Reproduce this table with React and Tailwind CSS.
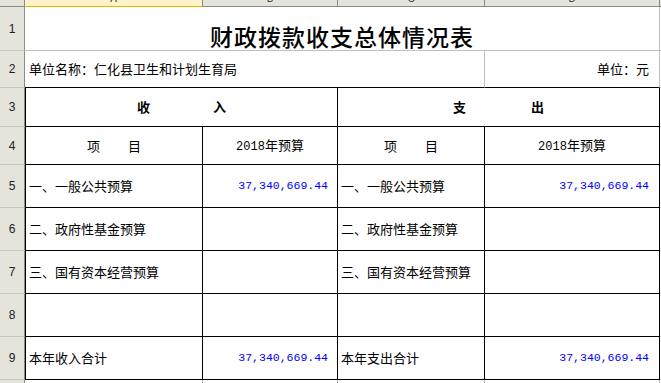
import React from 'react';

const cjk = "font-['Noto_Sans_CJK_SC',sans-serif]";
const mono = "font-['Liberation_Mono',monospace]";

const RowHead = ({ n }) => (
    <div className="w-[25px] shrink-0 bg-[#e4e3dc] border-r border-r-[#8a8a8a] border-b border-b-[#c6c5be] flex items-center justify-center text-[12px] text-[#222] font-['Liberation_Sans',sans-serif]">
        {n}
    </div>
);

const Amount = () => (
    <span className={`${mono} text-[11.5px] text-[#0000ff]`}>37,340,669.44</span>
);

const ColHead = ({ label, className }) => (
    <div className={`h-[7px] shrink-0 overflow-hidden flex justify-center ${className}`}>
        <span className="-mt-[6px] leading-[10px] text-[10px] text-[#333] font-['Liberation_Sans',sans-serif]">{label}</span>
    </div>
);

const Budget = () => (
    <span className="text-[13px] text-black">
        <span className={`${mono} text-[12px]`}>2018</span>年预算
    </span>
);

const BodyRow = ({ n, label, amountLeft, amountRight, labelRight }) => (
    <div className="flex h-[43px]">
        <RowHead n={n} />
        <div className="w-[178px] shrink-0 border-l border-r border-b border-black flex items-center pl-[3px] text-[13px] text-black">
            {label}
        </div>
        <div className="w-[135px] shrink-0 border-r border-b border-black flex items-center justify-end pr-[9px]">
            {amountLeft && <Amount />}
        </div>
        <div className="w-[147px] shrink-0 border-r border-b border-black flex items-center pl-[3px] text-[13px] text-black">
            {labelRight}
        </div>
        <div className="w-[175px] shrink-0 border-r border-b border-black flex items-center justify-end pr-[10px]">
            {amountRight && <Amount />}
        </div>
        <div className="flex-1 border-b border-[#c0c0c0]" />
    </div>
);

export default function App() {
    return (
        <div className={`w-[661px] h-[383px] overflow-hidden bg-white ${cjk}`}>
            {/* column letters */}
            <div className="flex">
                <div className="w-[25px] h-[7px] shrink-0 bg-[#e4e3dc] border-r border-b border-[#8a8a8a]" />
                <ColHead label="A" className="w-[178px] bg-[#fff4c9] border-b border-b-[#e2b400] border-r border-r-[#8a8a8a]" />
                <ColHead label="B" className="w-[135px] bg-[#e4e3dc] border-b border-r border-[#8a8a8a]" />
                <ColHead label="C" className="w-[147px] bg-[#e4e3dc] border-b border-r border-[#8a8a8a]" />
                <ColHead label="D" className="w-[175px] bg-[#e4e3dc] border-b border-r border-[#8a8a8a]" />
                <div className="flex-1 h-[7px] bg-[#e4e3dc] border-b border-[#8a8a8a]" />
            </div>

            {/* row 1: title */}
            <div className="flex h-[44px]">
                <RowHead n="1" />
                <div className="w-[635px] shrink-0 border-r border-b border-[#c0c0c0] flex items-end justify-center pb-[1px]">
                    <span className="text-[23px] leading-[26px] tracking-[1px] font-medium text-black">财政拨款收支总体情况表</span>
                </div>
                <div className="flex-1 border-b border-[#c0c0c0]" />
            </div>

            {/* row 2: unit */}
            <div className="flex h-[37px]">
                <RowHead n="2" />
                <div className="w-[460px] shrink-0 border-r border-r-[#c0c0c0] border-b border-b-black flex items-center pl-[4px] text-[13px] text-black">
                    单位名称：仁化县卫生和计划生育局
                </div>
                <div className="w-[175px] shrink-0 border-r border-r-[#c0c0c0] border-b border-b-black flex items-center justify-end pr-[10px] text-[13px] text-black">
                    单位：元
                </div>
                <div className="flex-1 border-b border-[#c0c0c0]" />
            </div>

            {/* row 3: section headers */}
            <div className="flex h-[39px]">
                <RowHead n="3" />
                <div className="w-[313px] shrink-0 border-l border-r border-b border-black flex items-center justify-center gap-[63px] text-[13px] font-bold text-black">
                    <span>收</span>
                    <span>入</span>
                </div>
                <div className="w-[322px] shrink-0 border-r border-b border-black flex items-center justify-center gap-[65px] text-[13px] font-bold text-black">
                    <span>支</span>
                    <span>出</span>
                </div>
                <div className="flex-1 border-b border-[#c0c0c0]" />
            </div>

            {/* row 4: column titles */}
            <div className="flex h-[38px]">
                <RowHead n="4" />
                <div className="w-[178px] shrink-0 border-l border-r border-b border-black flex items-center justify-center gap-[28px] text-[13px] text-black">
                    <span>项</span>
                    <span>目</span>
                </div>
                <div className="w-[135px] shrink-0 border-r border-b border-black flex items-center justify-center">
                    <Budget />
                </div>
                <div className="w-[147px] shrink-0 border-r border-b border-black flex items-center justify-center gap-[28px] text-[13px] text-black">
                    <span>项</span>
                    <span>目</span>
                </div>
                <div className="w-[175px] shrink-0 border-r border-b border-black flex items-center justify-center">
                    <Budget />
                </div>
                <div className="flex-1 border-b border-[#c0c0c0]" />
            </div>

            <BodyRow n="5" label="一、一般公共预算" labelRight="一、一般公共预算" amountLeft amountRight />
            <BodyRow n="6" label="二、政府性基金预算" labelRight="二、政府性基金预算" />
            <BodyRow n="7" label="三、国有资本经营预算" labelRight="三、国有资本经营预算" />
            <BodyRow n="8" />
            <BodyRow n="9" label="本年收入合计" labelRight="本年支出合计" amountLeft amountRight />

            {/* row 10, cut off */}
            <div className="flex h-[10px]">
                <RowHead n="" />
                <div className="w-[178px] shrink-0 border-r border-[#c0c0c0]" />
                <div className="w-[135px] shrink-0 border-r border-[#c0c0c0]" />
                <div className="w-[147px] shrink-0 border-r border-[#c0c0c0]" />
                <div className="w-[175px] shrink-0 border-r border-[#c0c0c0]" />
            </div>
        </div>
    );
}
